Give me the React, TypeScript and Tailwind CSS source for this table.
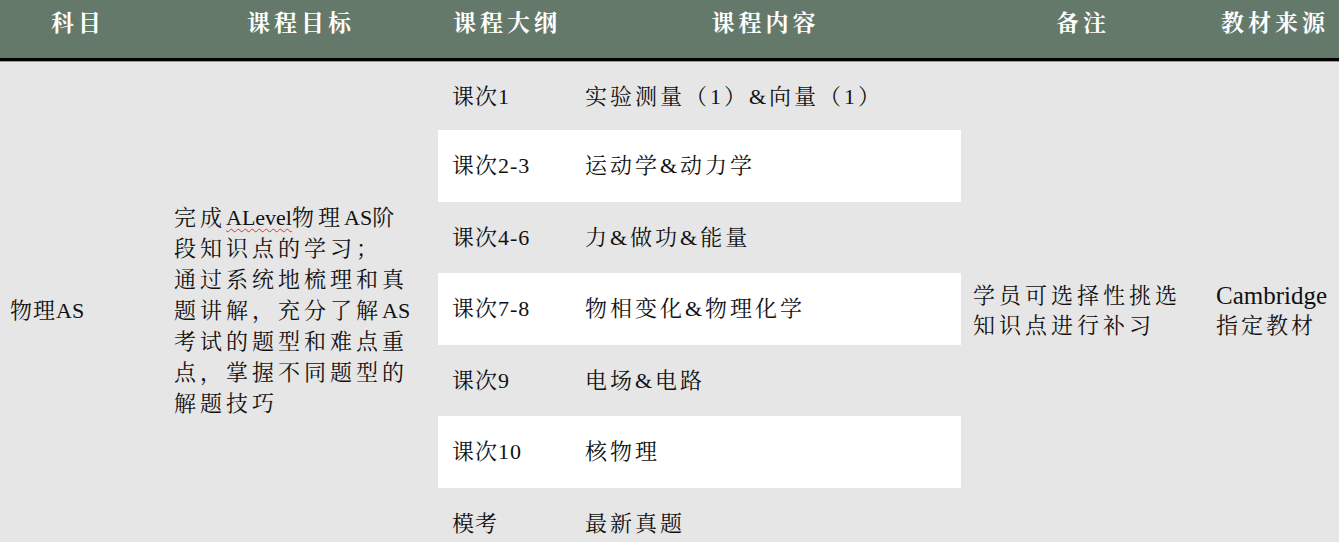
import React from "react";

const font = {
  fontFamily:
    '"Liberation Serif", "Noto Serif CJK SC", "Noto Sans CJK SC", serif',
};

const rows: [string, string][] = [
  ["课次1", "实验测量（1）&向量（1）"],
  ["课次2-3", "运动学&动力学"],
  ["课次4-6", "力&做功&能量"],
  ["课次7-8", "物相变化&物理化学"],
  ["课次9", "电场&电路"],
  ["课次10", "核物理"],
  ["模考", "最新真题"],
];

export default function App() {
  return (
    <div
      className="w-[1339px] h-[542px] overflow-hidden bg-[#e6e6e6] text-[#111111]"
      style={font}
    >
      {/* Header */}
      <div className="flex h-[58px] bg-[#65796b] text-white font-bold text-[23px] tracking-[4px]">
        <div className="w-[156px] flex items-center justify-center pb-[10px]">科目</div>
        <div className="w-[282px] flex items-center justify-center pb-[10px] pl-[8px]">课程目标</div>
        <div className="w-[132px] flex items-center pl-[15px] pb-[10px]">课程大纲</div>
        <div className="w-[391px] flex items-center justify-center pb-[10px]">课程内容</div>
        <div className="w-[244px] flex items-center justify-center pb-[10px]">备注</div>
        <div className="w-[134px] flex items-center justify-center pb-[10px] pl-[6px]">教材来源</div>
      </div>
      <div className="h-[3px] bg-black" />
      <div className="h-px bg-[#9a9a9a]" />

      {/* Body */}
      <div className="flex text-[22px] tracking-[3px]">
        <div className="w-[156px] flex items-center pl-[10px] tracking-[1px]">
          物理<span className="tracking-normal">AS</span>
        </div>
        <div className="w-[282px] flex items-center pl-[18px] tracking-[4px]">
          <div className="leading-[31px] whitespace-nowrap">
            <div>
              完成
              <span className="tracking-normal underline decoration-wavy decoration-[#e03030] decoration-1 underline-offset-[3px]">
                ALevel
              </span>
              物理<span className="tracking-normal">AS</span>阶
            </div>
            <div>段知识点的学习；</div>
            <div>通过系统地梳理和真</div>
            <div>
              题讲解，充分了解<span className="tracking-normal">AS</span>
            </div>
            <div>考试的题型和难点重</div>
            <div>点，掌握不同题型的</div>
            <div>解题技巧</div>
          </div>
        </div>
        <div className="w-[523px] flex flex-col">
          {rows.map(([a, b], i) => (
            <div
              key={a}
              className={`flex items-center ${i === 0 ? "h-[68px]" : "h-[71.5px]"} ${
                i % 2 === 1 ? "bg-white" : ""
              }`}
            >
              <div className="w-[132px] pl-[14px] tracking-[1px]">{a}</div>
              <div className="pl-[15px]">{b}</div>
            </div>
          ))}
        </div>
        <div className="w-[244px] flex items-center pl-[12px] leading-[30px] whitespace-nowrap tracking-[4px]">
          <div>
            <div>学员可选择性挑选</div>
            <div>知识点进行补习</div>
          </div>
        </div>
        <div className="w-[134px] flex items-center pl-[11px] leading-[30px] whitespace-nowrap">
          <div>
            <div className="tracking-normal text-[25px]">Cambridge</div>
            <div>指定教材</div>
          </div>
        </div>
      </div>
    </div>
  );
}
